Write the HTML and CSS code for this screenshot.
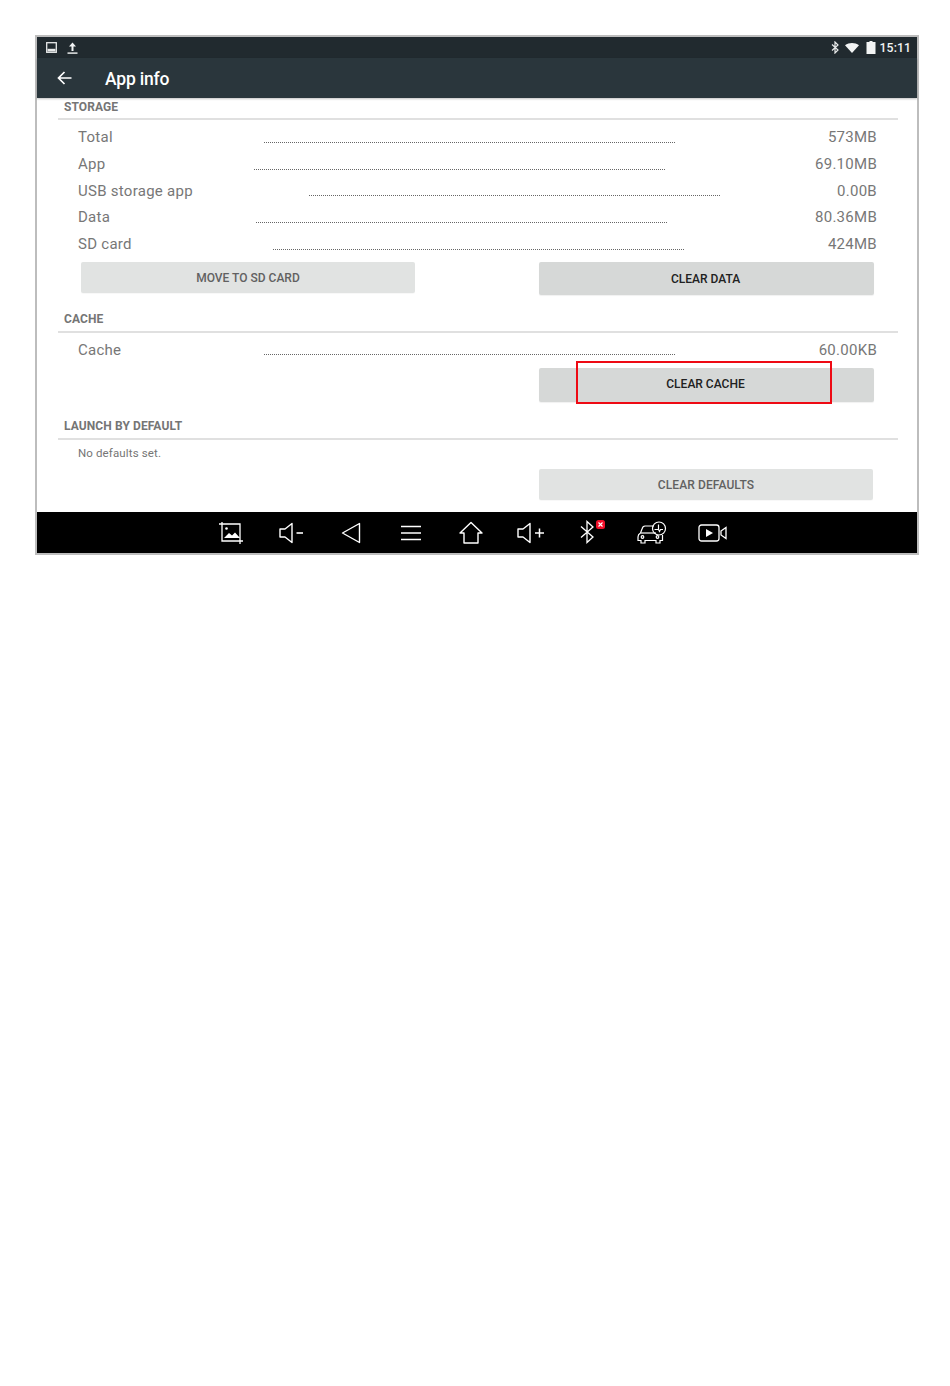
FILE: index.html
```html
<!DOCTYPE html>
<html lang="en">
<head>
<meta charset="utf-8">
<title>App info</title>
<link rel="stylesheet" href="styles.css">
</head>
<body>
<div class="frame">
  <div class="status">
    <svg class="st-img" width="11" height="11" viewBox="0 0 11 11"><rect x="0.7" y="0.7" width="9.6" height="9.6" fill="none" stroke="#e8eaea" stroke-width="1.3"/><path d="M1.5 9.5V6.8h8v2.7z" fill="#e8eaea"/></svg>
    <svg class="st-up" width="11" height="12" viewBox="0 0 11 12"><path d="M5.5 0.5 9 4.5H6.5V9h-2V4.5H2z" fill="#f2f4f4"/><rect x="0.5" y="10.4" width="10" height="1.4" fill="#f2f4f4"/></svg>
    <div class="st-right">
      <svg class="st-bt" width="9" height="13" viewBox="0 0 9 13"><path d="M1 3.5l6 5.5-3 3V1l3 3-6 5.5" fill="none" stroke="#e8eaea" stroke-width="1.2"/></svg>
      <svg width="14" height="10" viewBox="0 0 14 10"><path d="M0 2.2C4 -0.7 10 -0.7 14 2.2L7 10z" fill="#f2f4f4"/></svg>
      <svg width="10" height="13" viewBox="0 0 10 13"><path d="M3.500 0h3v1H9.500v12H.5V1H3.500z" fill="#f2f4f4"/></svg>
      <span class="time">15:11</span>
    </div>
  </div>
  <div class="toolbar">
    <svg class="back" width="15" height="14" viewBox="0 0 15 14"><path d="M14.500 7H1.500M7.500 1L1.500 7l6 6" fill="none" stroke="#fff" stroke-width="1.700"/></svg>
    <h1 class="title">App info</h1>
  </div>
  <div class="content">
    <section class="sec sec-storage">
      <h2 class="sec-head">STORAGE</h2>
      <div class="rows">
        <div class="row"><span class="lbl">Total</span><i class="dots d-total"></i><span class="val">573MB</span></div>
        <div class="row"><span class="lbl">App</span><i class="dots d-app"></i><span class="val">69.10MB</span></div>
        <div class="row"><span class="lbl">USB storage app</span><i class="dots d-usb"></i><span class="val">0.00B</span></div>
        <div class="row"><span class="lbl">Data</span><i class="dots d-data"></i><span class="val">80.36MB</span></div>
        <div class="row"><span class="lbl">SD card</span><i class="dots d-sd"></i><span class="val">424MB</span></div>
      </div>
      <div class="btns btns-storage">
        <button class="btn btn-light btn-move">MOVE TO SD CARD</button>
        <button class="btn btn-dark btn-data">CLEAR DATA</button>
      </div>
    </section>
    <section class="sec sec-cache">
      <h2 class="sec-head">CACHE</h2>
      <div class="rows">
        <div class="row"><span class="lbl">Cache</span><i class="dots d-total"></i><span class="val">60.00KB</span></div>
      </div>
      <div class="btns btns-cache">
        <button class="btn btn-dark btn-cache">CLEAR CACHE<span class="highlight"></span></button>
      </div>
    </section>
    <section class="sec sec-launch">
      <h2 class="sec-head">LAUNCH BY DEFAULT</h2>
      <p class="note">No defaults set.</p>
      <div class="btns btns-launch">
        <button class="btn btn-light btn-defaults">CLEAR DEFAULTS</button>
      </div>
    </section>
  </div>
  <nav class="nav">
    <span class="ni"><svg width="26" height="24" viewBox="0 0 26 24"><g fill="none" stroke="#fff" stroke-width="1.300"><path d="M4 1v19h21"/><path d="M1 3h21v20"/></g><path d="M6 17l5-5 3 2.500 3-3 5 5.500z" fill="#fff"/><circle cx="8.500" cy="7.500" r="1.300" fill="#fff"/></svg></span>
    <span class="ni"><svg width="26" height="22" viewBox="0 0 26 22"><path d="M2 7h5l7-5.500v19L7 15H2z" fill="none" stroke="#fff" stroke-width="1.400" stroke-linejoin="round"/><path d="M18.500 11H25" stroke="#fff" stroke-width="1.600"/></svg></span>
    <span class="ni"><svg width="20" height="22" viewBox="0 0 20 22"><path d="M18.500 1.500v19L1.500 11z" fill="none" stroke="#fff" stroke-width="1.400" stroke-linejoin="round"/></svg></span>
    <span class="ni"><svg width="20" height="16" viewBox="0 0 20 16"><path d="M0 1.500h20M0 8h20M0 14.500h20" stroke="#fff" stroke-width="1.400"/></svg></span>
    <span class="ni"><svg width="24" height="23" viewBox="0 0 24 23"><path d="M1 12L12 1.500 23 12h-4v10H5V12z" fill="none" stroke="#fff" stroke-width="1.400" stroke-linejoin="round"/></svg></span>
    <span class="ni"><svg width="28" height="22" viewBox="0 0 28 22"><path d="M1 7h5l7-5.500v19L6 15H1z" fill="none" stroke="#fff" stroke-width="1.400" stroke-linejoin="round"/><path d="M18 11h9M22.500 6.500v9" stroke="#fff" stroke-width="1.500"/></svg></span>
    <span class="ni"><svg class="bt" width="26" height="24" viewBox="0 0 26 24"><path d="M1 6.500l12 10.500-6 5.500V1.500l6 5.500L1 17.500" fill="none" stroke="#fff" stroke-width="1.300"/><rect x="16" y="0" width="9" height="9" rx="2.500" fill="#f0102a"/><path d="M18.500 2.500l4 4M22.500 2.500l-4 4" stroke="#fff" stroke-width="1.100"/></svg></span>
    <span class="ni"><svg class="car" width="30" height="24" viewBox="0 0 30 24"><g fill="none" stroke="#fff" stroke-width="1.200"><path d="M17 5H8C6 5 5.500 6 5 8l-1.500 4C1.500 13 1 14 1 16v3.500h3v2.500h4v-2.500h11v2.500h4v-2.500h2.500V14"/><path d="M4 12h15"/><circle cx="5.500" cy="16" r="1.300"/><circle cx="20.500" cy="16" r="1.300"/><circle cx="22" cy="7.500" r="6.500"/><path d="M17.500 8.500h4V3.500M21.500 8.500l1 2 1-2h2.500"/></g></svg></span>
    <span class="ni"><svg class="vid" width="29" height="18" viewBox="0 0 29 18"><rect x="1" y="1" width="20" height="16" rx="2.500" fill="none" stroke="#fff" stroke-width="1.300"/><path d="M8 5v8l7-4z" fill="#fff"/><path d="M23 7l5-3.500v11L23 11z" fill="none" stroke="#fff" stroke-width="1.300"/></svg></span>
  </nav>
</div>
</body>
</html>
```

FILE: styles.css
```css
* { box-sizing: border-box; }
html, body { margin: 0; background: #fff; }
body { padding: 35px; height: 1386px; font-family: Roboto, "Liberation Sans", sans-serif; }
button { font-family: inherit; border: 0; padding: 0; }

.frame { width: 884px; height: 520px; border: 2px solid #bdbdbd; display: flex; flex-direction: column; background: #fff; }

.status { height: 21px; flex: none; background: #212a2f; display: flex; align-items: center; padding: 0 6px 0 9px; }
.st-up { margin-left: 10px; }
.st-right { margin-left: auto; display: flex; align-items: center; gap: 7px; }
.st-bt { margin-right: -2px; }
.time { font-size: 12.200px; font-weight: 500; color: #f2f4f4; letter-spacing: 0.100px; margin-left: -3px; }

.toolbar { height: 40px; flex: none; background: #2a363c; display: flex; align-items: center; padding-left: 20px; box-shadow: 0 1px 2px rgba(0,0,0,.25); position: relative; }
.back { margin-top: -1px; }
.title { margin: 2px 0 0 33px; font-size: 17.500px; font-weight: 500; color: #fff; letter-spacing: -0.200px; }

.content { flex: 1; min-height: 0; padding: 0 19px 0 21px; overflow: hidden; }
.sec-head { display: flow-root; margin: 0; height: 20px; padding: 0 0 0 6px; font-size: 12px; line-height: 15px; font-weight: 700; color: #757575; letter-spacing: 0.100px; }
.sec-head::after { content: ""; display: block; height: 2px; background: #e0e0e0; margin: 4px 0 0 -6px; }
.sec-storage { padding-top: 2px; }
.sec-storage .sec-head { height: 19px; }
.sec-storage .sec-head::after { margin-top: 3px; }

.rows { padding: 5px 21px 0 20px; }
.sec-cache .rows { padding-top: 4px; }
.row { height: 26.700px; display: flex; align-items: center; font-size: 15px; color: #777; letter-spacing: 0.270px; }
.lbl { flex: 0 0 114px; white-space: nowrap; }
.val { margin-left: auto; white-space: nowrap; }
.dots { flex: none; width: 411px; height: 1px; margin-top: 10px; border-top: 1px dotted #666; }
.d-total { margin-left: 72px; }
.d-app { margin-left: 62px; }
.d-usb { margin-left: 116px; }
.d-data { margin-left: 64px; }
.d-sd { margin-left: 81px; }

.btns { display: flex; justify-content: space-between; padding-left: 23px; }
.btn { display: block; font-size: 12px; font-weight: 500; border-radius: 2px; text-align: center; }
.btn-light { background: #e1e3e2; color: #616161; box-shadow: 0 1px 1px rgba(0,0,0,.03); }
.btn-dark { background: #d6d8d7; color: #212121; box-shadow: 0 1px 1px rgba(0,0,0,.06); padding-right: 2px; }
.btn-move { width: 334px; height: 31px; padding-top: 1px; }
.btn-data { width: 335px; height: 33px; }
.btn-cache { width: 335px; height: 34px; position: relative; padding-bottom: 2px; }
.btn-defaults { width: 334px; height: 31px; letter-spacing: 0.100px; }
.btns-storage { padding-right: 24px; height: 37px; margin-top: 5px; }
.btns-cache { justify-content: flex-end; padding-right: 24px; height: 35px; margin-top: 5px; }
.btns-launch { justify-content: flex-end; padding-right: 25px; margin-top: 9px; }
.sec-cache { margin-top: 13px; }
.sec-launch { margin-top: 16px; }
.highlight { position: absolute; left: 37px; top: -7px; width: 256px; height: 43px; border: 2px solid #ee0a14; }
.note { margin: 0; padding: 7px 0 0 20px; font-size: 11.500px; line-height: 14px; color: #757575; letter-spacing: 0.130px; }

.nav { height: 41px; flex: none; background: #000; display: flex; justify-content: center; align-items: center; padding-right: 12px; }
.ni { width: 60px; display: flex; justify-content: center; align-items: center; }
.bt { margin-left: 4px; margin-top: -2px; }
.car { margin-left: 2px; }
.vid { margin-left: 2px; }
```
